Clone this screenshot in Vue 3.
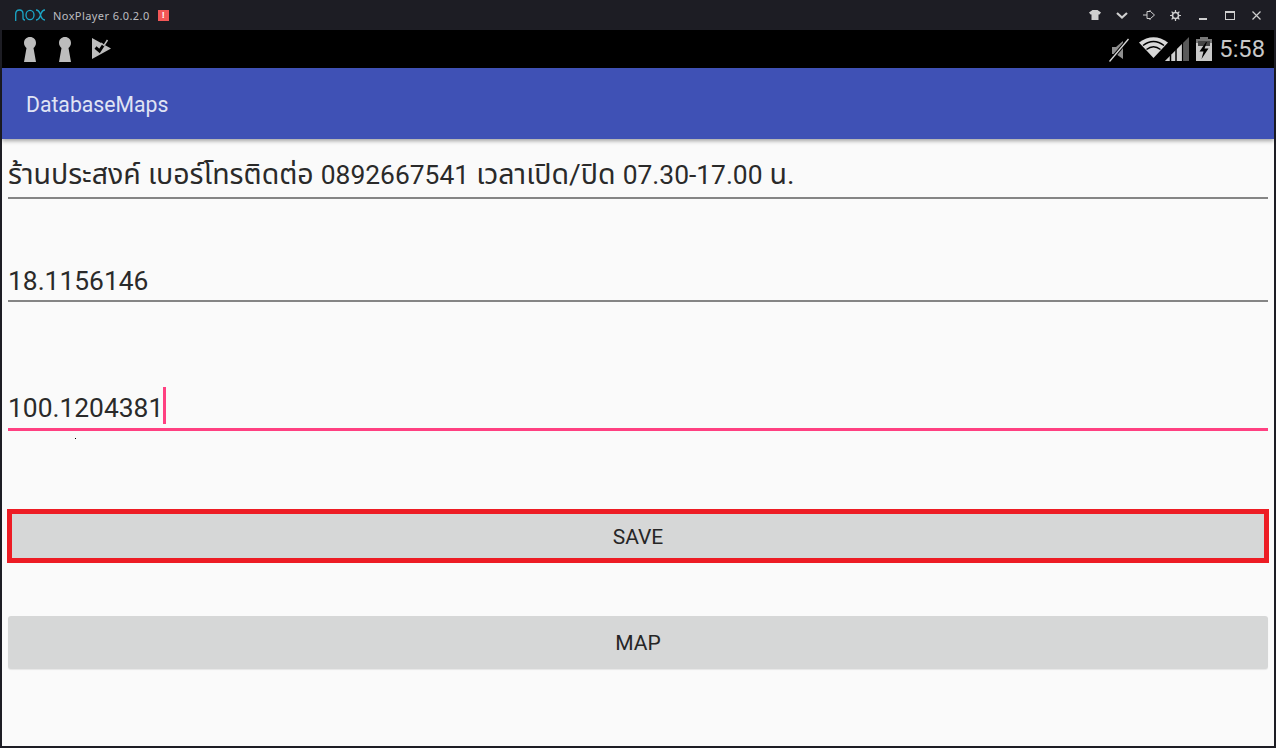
<script setup>
const firstRuns = [
  { t: 'ร้านประสงค์ เบอร์โทรติดต่อ ', thai: true },
  { t: '0892667541', thai: false },
  { t: ' เวลาเปิด/ปิด ', thai: true },
  { t: '07.30-17.00', thai: false },
  { t: ' น.', thai: true },
]
</script>

<template>
  <div class="frame">
    <header class="titlebar">
      <svg class="nox" width="30" height="12" viewBox="0 0 30 12" fill="none" stroke="#1ba6c6" stroke-width="1.300">
        <path d="M0.700 12V5Q0.700 1 4.500 1Q8 1 8 5V9Q8 11 10 11" />
        <ellipse cx="15" cy="6" rx="4" ry="4.700" />
        <path d="M21 1Q24 1 25.500 6Q27 11 30 11M30 1Q27 1 25.500 6Q24 11 21 11" />
      </svg>
      <span class="product">NoxPlayer 6.0.2.0</span>
      <span class="alert">!</span>
      <div class="winbtns">
        <span class="cell"><svg width="12" height="10" viewBox="0 0 12 10" fill="#cfcfcf"><path d="M3.500 0H8.500L12 2.500L10.500 4.500H9.500V10H2.500V4.500H1.500L0 2.500Z" /></svg></span>
        <span class="cell"><svg width="12" height="7" viewBox="0 0 12 7" fill="none" stroke="#cfcfcf" stroke-width="2.200"><path d="M1 1L6 5.500L11 1" /></svg></span>
        <span class="cell"><svg width="12" height="10" viewBox="0 0 12 10" fill="none" stroke="#cfcfcf" stroke-width="1"><path d="M0 5H4M4 1.500H7.500L11.500 5L7.500 8.500H4ZM7 1.500V0M7 8.500V10" /></svg></span>
        <span class="cell"><svg width="11" height="11" viewBox="0 0 11 11" fill="none" stroke="#cfcfcf"><circle cx="5.500" cy="5.500" r="3" stroke-width="1.600" /><path d="M5.500 0V2M5.500 9V11M0 5.500H2M9 5.500H11M1.600 1.600L3 3M8 8L9.400 9.400M9.400 1.600L8 3M3 8L1.600 9.400" stroke-width="1.200" /></svg></span>
        <span class="cell"><svg width="8" height="10" viewBox="0 0 8 10" fill="#cfcfcf"><rect x="0" y="8" width="8" height="2" /></svg></span>
        <span class="cell"><svg width="10" height="9" viewBox="0 0 10 9" fill="none" stroke="#cfcfcf" stroke-width="1"><rect x="0.500" y="0.500" width="9" height="8" /><path d="M0 1.500H10" /></svg></span>
        <span class="cell"><svg width="9" height="9" viewBox="0 0 9 9" fill="none" stroke="#cfcfcf" stroke-width="1.200"><path d="M0.500 0.500L8.500 8.500M8.500 0.500L0.500 8.500" /></svg></span>
      </div>
    </header>

    <div class="device">
      <div class="statusbar">
        <div class="notif">
          <svg v-for="n in 2" :key="n" width="14" height="25" viewBox="0 0 14 25" fill="#bdbdbd">
            <path d="M7 0C10.500 0 13 2.500 13 6C13 8.500 11.500 10 10.500 11L13 25H1L3.500 11C2.500 10 1 8.500 1 6C1 2.500 3.500 0 7 0Z" />
          </svg>
          <svg class="play" width="20" height="21" viewBox="0 0 20 21">
            <path d="M0 0L19 10.500L0 21Z" fill="#bdbdbd" />
            <path d="M3.500 9.500L7.500 13L15 1.500" fill="none" stroke="#000" stroke-width="3" />
            <path d="M9 5L12 7.500L15.500 2" fill="none" stroke="#bdbdbd" stroke-width="1.500" />
          </svg>
        </div>
        <div class="sysicons">
          <svg class="mute" width="20" height="24" viewBox="0 0 20 24">
            <path d="M3 9H7L14 3V21L7 16H3Z" fill="#8f8f8f" />
            <path d="M0.500 23.500L19.500 1" stroke="#000" stroke-width="3.500" />
            <path d="M0.500 23.500L19.500 1" stroke="#d8d8d8" stroke-width="1.300" />
          </svg>
          <svg class="wifi" width="29" height="21" viewBox="0 0 29 21">
            <path d="M14.500 21L0 5.500Q14.500 -5 29 5.500Z" fill="#d8d8d8" />
            <path d="M4 8.500Q14.500 0.500 25 8.500M7.500 12.500Q14.500 7 21.500 12.500" fill="none" stroke="#000" stroke-width="1.500" />
          </svg>
          <svg class="signal" width="24" height="24" viewBox="0 0 24 24">
            <path d="M0 24L24 0V24Z" fill="#5a5a5a" />
            <path d="M0 24L17 7V24Z" fill="#d0d0d0" />
            <path d="M5.500 18V24M11 12V24" stroke="#000" stroke-width="1.500" />
            <path d="M17.500 6V24" stroke="#000" stroke-width="1.200" />
          </svg>
          <svg class="battery" width="16" height="24" viewBox="0 0 16 24">
            <path d="M4 0H12V2H16V24H0V2H4Z" fill="#777" />
            <rect x="0" y="6" width="16" height="18" fill="#c9c9c9" />
            <rect x="2" y="4" width="12" height="5" fill="#444" />
            <path d="M10 5L3.500 14.500H7.500L5.500 22L12.500 11.500H8.500L11 5Z" fill="#000" />
          </svg>
          <span class="clock">5:58</span>
        </div>
      </div>

      <div class="appbar"><span class="apptitle">DatabaseMaps</span></div>

      <main class="content">
        <div class="field first">
          <span v-for="r in firstRuns" :key="r.t" :class="{ thai: r.thai }">{{ r.t }}</span>
        </div>
        <div class="field second"><span>18.1156146</span></div>
        <div class="field active"><span>100.1204381</span><i class="caret"></i></div>
        <i class="speck"></i>
        <button class="btn save">SAVE</button>
        <button class="btn map">MAP</button>
      </main>
    </div>
  </div>
</template>

<style>
html, body { margin: 0; padding: 0; background: #1d1d24; }
</style>

<style scoped>
.frame {
  width: 1276px;
  height: 748px;
  box-sizing: border-box;
  background: #1d1d24;
  padding: 0 2px 2px;
  display: flex;
  flex-direction: column;
  overflow: hidden;
}
.titlebar {
  height: 30px;
  margin: 0 -2px;
  flex: none;
  display: flex;
  align-items: center;
  padding-left: 15px;
  padding-right: 6px;
  color: #c4c4c4;
}
.nox { flex: none; }
.product {
  margin-left: 8px;
  font: 11px "Noto Sans", "DejaVu Sans", sans-serif;
  letter-spacing: 0.42px;
  color: #bdbdc0;
}
.alert {
  width: 11px;
  height: 11px;
  margin-left: 8px;
  background: #f25757;
  color: #fff;
  font: bold 9px/11px "Liberation Sans", sans-serif;
  text-align: center;
}
.winbtns {
  margin-left: auto;
  display: flex;
  align-items: center;
}
.cell {
  width: 27px;
  display: flex;
  justify-content: center;
  align-items: center;
}
.device {
  flex: 1;
  display: flex;
  flex-direction: column;
  min-height: 0;
  background: #fafafa;
}
.statusbar {
  height: 38px;
  flex: none;
  background: #000;
  display: flex;
  align-items: center;
  justify-content: space-between;
  padding: 0 9px 0 21px;
}
.notif { display: flex; align-items: center; gap: 21px; }
.notif .play { margin-left: -1px; margin-top: -1px; }
.sysicons { display: flex; align-items: center; }
.mute { margin-right: 10px; margin-top: 1px; }
.wifi { margin-right: -3px; margin-top: -3px; }
.signal { margin-right: 7px; margin-top: -1px; }
.battery { margin-right: 7px; margin-top: -1px; }
.clock {
  font: 23.700px Roboto, sans-serif;
  color: #c8c8c8;
}
.appbar {
  height: 71px;
  flex: none;
  background: #3f51b5;
  box-shadow: 0 2px 4px rgba(0, 0, 0, 0.35);
  display: flex;
  align-items: center;
  padding-left: 24px;
  position: relative;
  z-index: 1;
}
.apptitle {
  font: 400 21.200px Roboto, sans-serif;
  color: #e0e4f4;
  margin-top: 1px;
}
.content {
  flex: 1;
  display: flex;
  flex-direction: column;
  padding: 0 6px;
  position: relative;
}
.field {
  display: flex;
  align-items: flex-end;
  box-sizing: border-box;
  font: 26.400px/30px Roboto, "Noto Sans Thai", "Noto Sans", sans-serif;
  color: #2a2a2a;
  border-bottom: 2px solid #858585;
  white-space: pre;
}
.thai { font-size: 28.500px; }
.first { height: 60px; padding-bottom: 7px; }
.second { height: 103px; padding-bottom: 4px; }
.active {
  height: 129px;
  padding-bottom: 5px;
  border-bottom: 3px solid #ff4081;
}
.caret {
  width: 3px;
  height: 37px;
  margin-bottom: -1px;
  background: #ff4081;
}
.speck {
  position: absolute;
  left: 73px;
  top: 299px;
  width: 1px;
  height: 1px;
  background: #000;
}
.btn {
  font: 400 21px Roboto, sans-serif;
  color: #262626;
  background: #d6d7d7;
  border: 0;
  padding: 1px 0 0;
  display: block;
  box-sizing: border-box;
}
.save {
  height: 54px;
  margin: 78px -1px 0;
  border: 5px solid #ed1c24;
}
.map {
  height: 53px;
  margin-top: 53px;
  border-radius: 3px;
  box-shadow: 0 1px 1px rgba(0, 0, 0, 0.08);
}
</style>
